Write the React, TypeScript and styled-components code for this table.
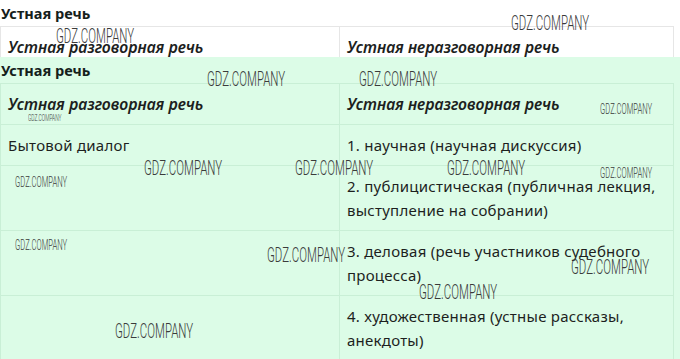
import React from "react";
import styled, { createGlobalStyle } from "styled-components";

const Global = createGlobalStyle`
  html, body { margin: 0; padding: 0; background: #ffffff; }
  body { font-family: "Noto Sans", "Open Sans", sans-serif; color: #1d1f1e; }
  * { box-sizing: border-box; }
`;

const Page = styled.div`
  position: relative;
  width: 680px;
  height: 359px;
  overflow: hidden;
`;

const Section = styled.section<{ $green?: boolean; $clip?: number }>`
  background: ${(p) => (p.$green ? "#dcfce7" : "#ffffff")};
  ${(p) => (p.$clip ? `height: ${p.$clip}px; overflow: hidden;` : "")}
`;

const Heading = styled.h3`
  margin: 0;
  padding: 3px 0 3px 1px;
  height: 26px;
  font-size: 14.5px;
  line-height: 20px;
  font-weight: 700;
  color: #14201b;
`;

const Table = styled.div<{ $green?: boolean }>`
  --line: ${(p) => (p.$green ? "#c9efd6" : "#e6e6e6")};
  width: 674px;
  display: grid;
  grid-template-columns: 339px 1fr;
  border-top: 1px solid var(--line);
  border-left: 1px solid var(--line);
`;

const Cell = styled.div<{ $head?: boolean }>`
  padding: 8px 8px 8px 7px;
  border-right: 1px solid var(--line);
  border-bottom: 1px solid var(--line);
  font-size: ${(p) => (p.$head ? 15.8 : 15)}px;
  letter-spacing: ${(p) => (p.$head ? 0 : 0.25)}px;
  line-height: 24px;
  font-style: ${(p) => (p.$head ? "italic" : "normal")};
  font-weight: ${(p) => (p.$head ? 600 : 400)};
`;

const Mark = styled.span<{ $size: "big" | "small" | "tiny" }>`
  position: absolute;
  font-family: Roboto, "Liberation Sans", sans-serif;
  font-weight: 300;
  color: #3a3a3a;
  white-space: nowrap;
  transform-origin: 0 0;
  transform: scaleX(0.545);
  font-size: ${(p) => (p.$size === "big" ? 21 : p.$size === "small" ? 14 : 9)}px;
  line-height: 1;
  pointer-events: none;
`;

const rows: [string, string][] = [
  ["Бытовой диалог", "1. научная (научная дискуссия)"],
  ["", "2. публицистическая (публичная лекция, выступление на собрании)"],
  ["", "3. деловая (речь участников судебного процесса)"],
  ["", "4. художественная (устные рассказы, анекдоты)"],
];

const marks: { x: number; y: number; s: "big" | "small" | "tiny" }[] = [
  { x: 511, y: 13, s: "big" },
  { x: 56, y: 26, s: "big" },
  { x: 207, y: 69, s: "big" },
  { x: 359, y: 69, s: "big" },
  { x: 600, y: 102, s: "small" },
  { x: 28, y: 114, s: "tiny" },
  { x: 144, y: 158, s: "big" },
  { x: 295, y: 158, s: "big" },
  { x: 447, y: 158, s: "big" },
  { x: 15, y: 175, s: "small" },
  { x: 600, y: 166, s: "small" },
  { x: 15, y: 238, s: "small" },
  { x: 267, y: 245, s: "big" },
  { x: 571, y: 257, s: "big" },
  { x: 419, y: 282, s: "big" },
  { x: 115, y: 321, s: "big" },
];

function SpeechTable({ green, full }: { green?: boolean; full?: boolean }) {
  return (
    <Table $green={green}>
      <Cell $head>Устная разговорная речь</Cell>
      <Cell $head>Устная неразговорная речь</Cell>
      {full &&
        rows.map(([a, b], i) => (
          <React.Fragment key={i}>
            <Cell>{a}</Cell>
            <Cell>{b}</Cell>
          </React.Fragment>
        ))}
    </Table>
  );
}

export default function App() {
  return (
    <Page>
      <Global />
      <Section $clip={57}>
        <Heading>Устная речь</Heading>
        <SpeechTable />
      </Section>
      <Section $green>
        <Heading>Устная речь</Heading>
        <SpeechTable green full />
      </Section>
      {marks.map((m, i) => (
        <Mark key={i} $size={m.s} style={{ left: m.x, top: m.y }}>
          GDZ.COMPANY
        </Mark>
      ))}
    </Page>
  );
}
